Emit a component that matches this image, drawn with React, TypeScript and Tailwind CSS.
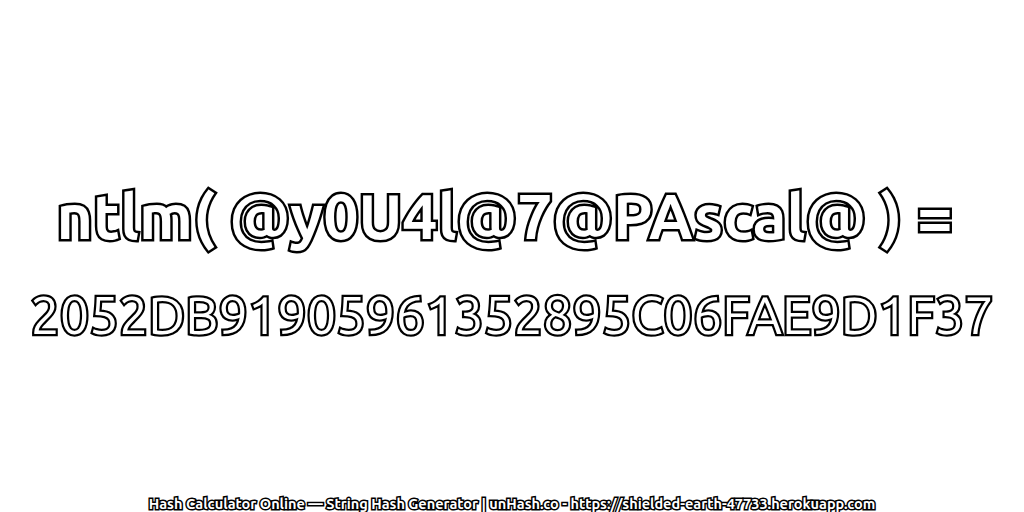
export default function App() {
  return (
    <div className="w-[1024px] h-[512px] bg-white flex flex-col items-center overflow-hidden font-['Ubuntu','Noto_Sans',sans-serif] text-white [paint-order:stroke_fill]">
      <div className="flex-1 flex flex-col items-center justify-start pt-[182px] gap-[35px]">
        <div className="text-[62.6px] leading-[68px] font-bold whitespace-nowrap mr-[15px] [-webkit-text-stroke:5px_#000]">ntlm( @y0U4l@7@PAscal@ ) =</div>
        <div className="text-[52.3px] leading-[60px] whitespace-nowrap [-webkit-text-stroke:4.5px_#000]">2052DB91905961352895C06FAE9D1F37</div>
      </div>
      <div className="text-[14.5px] leading-[16px] font-bold whitespace-nowrap [-webkit-text-stroke:3px_#000]">Hash Calculator Online — String Hash Generator | unHash.co - https://shielded-earth-47733.herokuapp.com</div>
    </div>
  )
}
